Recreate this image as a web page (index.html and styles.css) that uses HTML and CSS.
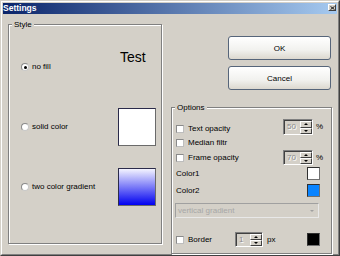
FILE: index.html
```html
<!DOCTYPE html>
<html>
<head>
<meta charset="utf-8">
<link rel="stylesheet" href="styles.css">
</head>
<body>
<div class="window">
  <div class="window-inner">
    <div class="titlebar">
      <span class="title">Settings</span>
      <span class="close"><svg width="6" height="5" viewBox="0 0 6 5"><path d="M0.5 0.5 L5.5 4.5 M5.5 0.5 L0.5 4.5" stroke="#000" stroke-width="1.1" fill="none"/></svg></span>
    </div>
    <div class="content">
      <div class="group style-group">
        <span class="legend">Style</span>
        <div class="srow">
          <span class="radio checked"></span><span class="rlabel">no fill</span>
          <div class="preview preview-text"><span class="test">Test</span></div>
        </div>
        <div class="srow">
          <span class="radio"></span><span class="rlabel">solid color</span>
          <div class="preview swatch-big white"></div>
        </div>
        <div class="srow">
          <span class="radio"></span><span class="rlabel">two color gradient</span>
          <div class="preview swatch-big gradient"></div>
        </div>
      </div>
      <div class="right-col">
        <button class="btn">OK</button>
        <button class="btn btn-cancel">Cancel</button>
        <div class="group options-group">
          <span class="legend">Options</span>
          <div class="orow r1">
            <span class="check"></span><span class="clabel">Text opacity</span>
            <span class="spin w30"><span class="spin-val">50</span><span class="spin-btns"><span class="sb up"><i></i></span><span class="sb down"><i></i></span></span></span>
            <span class="unit pct">%</span>
          </div>
          <div class="orow r2">
            <span class="check"></span><span class="clabel">Median filtr</span>
          </div>
          <div class="orow r3">
            <span class="check"></span><span class="clabel">Frame opacity</span>
            <span class="spin w30"><span class="spin-val">70</span><span class="spin-btns"><span class="sb up"><i></i></span><span class="sb down"><i></i></span></span></span>
            <span class="unit pct">%</span>
          </div>
          <div class="orow r4">
            <span class="clabel plain">Color1</span>
            <span class="swatch white"></span>
          </div>
          <div class="orow r5">
            <span class="clabel plain">Color2</span>
            <span class="swatch blue"></span>
          </div>
          <div class="orow r6">
            <div class="dropdown"><span class="dd-text">vertical gradient</span><span class="dd-arrow"></span></div>
          </div>
          <div class="orow r7">
            <span class="border-part"><span class="check"></span><span class="clabel">Border</span></span>
            <span class="spin w28"><span class="spin-val">1</span><span class="spin-btns"><span class="sb up"><i></i></span><span class="sb down"><i></i></span></span></span>
            <span class="unit px">px</span>
            <span class="swatch black"></span>
          </div>
        </div>
      </div>
    </div>
  </div>
</div>
</body>
</html>
```
FILE: styles.css
```css
* { box-sizing: border-box; }
html, body { margin: 0; padding: 0; }
body {
  width: 340px;
  height: 256px;
  overflow: hidden;
  background: #d4d0c8;
  font-family: "Liberation Sans", Arial, sans-serif;
  font-size: 8px;
  color: #000;
}
.window {
  width: 340px;
  height: 256px;
  background: #d4d0c8;
  border: 1px solid;
  border-color: #d4d0c8 #404040 #404040 #d4d0c8;
}
.window-inner {
  height: 100%;
  border: 1px solid;
  border-color: #fff #808080 #808080 #fff;
  padding: 1px;
  display: flex;
  flex-direction: column;
}
.titlebar {
  height: 11px;
  flex: none;
  background: linear-gradient(to right, #0a246a, #a6caf0);
  display: flex;
  align-items: flex-start;
}
.title {
  color: #fff;
  font-weight: bold;
  font-size: 8.5px;
  line-height: 11px;
  padding-left: 0;
}
.close {
  margin-left: auto;
  margin-right: 1px;
  margin-top: 1px;
  width: 8px;
  height: 7px;
  background: #d4d0c8;
  border: 1px solid;
  border-color: #fff #404040 #404040 #fff;
  display: flex;
  align-items: center;
  justify-content: center;
}
.close svg { display: block; width: 5px; height: 4px; }
.content {
  flex: 1;
  display: flex;
  padding: 10px 5px 0 5px;
  gap: 9px;
}
.group {
  position: relative;
  border: 1px solid #808080;
  box-shadow: inset 1px 1px 0 #fff, 1px 1px 0 #fff;
}
.legend {
  position: absolute;
  top: -5px;
  left: 3px;
  padding: 0 2px;
  background: #d4d0c8;
  line-height: 9px;
  font-size: 8px;
}
.style-group {
  width: 154px;
  height: 220px;
  padding: 23px 5px 0 12px;
  display: flex;
  flex-direction: column;
  gap: 22px;
}
.srow {
  height: 38px;
  display: flex;
  align-items: center;
}
.radio {
  width: 8px;
  height: 8px;
  border-radius: 50%;
  background: #fff;
  border: 1px solid #8a8a8a;
  border-right-color: #c8c8c8;
  border-bottom-color: #c8c8c8;
  display: flex;
  align-items: center;
  justify-content: center;
  margin-right: 3px;
  flex: none;
}
.radio.checked::after {
  content: "";
  width: 3px;
  height: 3px;
  border-radius: 50%;
  background: #000;
}
.rlabel { line-height: 10px; }
.preview {
  margin-left: auto;
  width: 38px;
  height: 38px;
  flex: none;
}
.preview-text { align-self: flex-start; padding-left: 2px; }
.test {
  font-size: 14px;
  line-height: 16px;
  display: block;
  padding-top: 1px;
}
.swatch-big {
  border: 1px solid;
  border-color: #2a2a4a #6a6a6a #6a6a6a #2a2a4a;
}
.swatch-big.white { background: #fff; }
.swatch-big.gradient { background: linear-gradient(#f4f4ff, #0000f0); }
.right-col {
  width: 161px;
  display: flex;
  flex-direction: column;
  padding-top: 12px;
}
.btn {
  align-self: flex-end;
  margin-right: 1px;
  width: 103px;
  height: 24px;
  border: 1px solid #56657a;
  border-radius: 3px;
  background: linear-gradient(#ffffff, #f1f1ee 60%, #dcd8cf);
  font-family: "Liberation Sans", Arial, sans-serif;
  font-size: 8px;
  color: #000;
  padding: 0;
}
.btn-cancel { margin-top: 6px; }
.options-group {
  margin-top: 17px;
  width: 161px;
  height: 147px;
  padding: 11px 5px 0 4px;
  display: flex;
  flex-direction: column;
}
.orow {
  display: flex;
  align-items: center;
}
.r1 { height: 16px; }
.r2 { height: 15px; }
.r3 { height: 15px; }
.r4 { height: 13px; margin-top: 2px; }
.r5 { height: 13px; margin-top: 4px; }
.r6 { height: 15px; margin-top: 6px; }
.r7 { height: 15px; margin-top: 14px; }
.check {
  width: 8px;
  height: 8px;
  background: #fff;
  border: 1px solid #8a8a8a;
  border-right-color: #bdbdbd;
  border-bottom-color: #bdbdbd;
  flex: none;
  margin-right: 4px;
}
.r1 .check, .r1 .clabel { margin-top: 3px; }
.clabel { line-height: 10px; }
.r1 .clabel, .r3 .clabel, .r2 .clabel { flex: 1; }
.plain { flex: 1; }
.spin {
  display: flex;
  height: 15px;
  border: 1px solid;
  border-color: #808080 #fff #fff #808080;
  background: #d4d0c8;
  flex: none;
}
.r1 .spin { height: 16px; }
.w30 { width: 30px; }
.w28 { width: 28px; }
.spin-val {
  flex: 1;
  color: #8c8c8c;
  text-shadow: 1px 1px 0 #fff;
  padding-left: 2px;
  line-height: 12px;
  border-top: 1px solid #404040;
  border-left: 1px solid #404040;
}
.spin-btns {
  width: 12px;
  display: flex;
  flex-direction: column;
  border-top: 1px solid #404040;
}
.sb {
  flex: 1;
  background: #d4d0c8;
  border: 1px solid;
  border-color: #fff #404040 #404040 #fff;
  display: flex;
  align-items: center;
  justify-content: center;
}
.sb i {
  display: block;
  width: 0;
  height: 0;
  border-left: 2px solid transparent;
  border-right: 2px solid transparent;
}
.sb.up i { border-bottom: 2px solid #000; }
.sb.down i { border-top: 2px solid #000; }
.unit { line-height: 10px; }
.pct { width: 13px; padding-left: 3px; }
.px { margin-left: 4px; }
.swatch {
  width: 13px;
  height: 13px;
  margin-left: auto;
  margin-right: 6px;
  border: 1px solid;
  border-color: #303030 #707070 #707070 #303030;
  flex: none;
}
.swatch.white { background: #fff; }
.swatch.blue { background: #0a84ff; }
.swatch.black { background: #000; }
.dropdown {
  margin-left: -1px;
  width: 144px;
  height: 15px;
  border: 1px solid;
  border-color: #a0a0a0 #e8e8e8 #e8e8e8 #a0a0a0;
  background: #d4d0c8;
  display: flex;
  align-items: center;
  padding: 0 4px 0 2px;
}
.dd-text {
  flex: 1;
  color: #a7a7a7;
  line-height: 10px;
}
.dd-arrow {
  width: 0;
  height: 0;
  border-left: 2px solid transparent;
  border-right: 2px solid transparent;
  border-top: 2px solid #a0a0a0;
}
.border-part {
  width: 59px;
  display: flex;
  align-items: center;
  flex: none;
}
```
